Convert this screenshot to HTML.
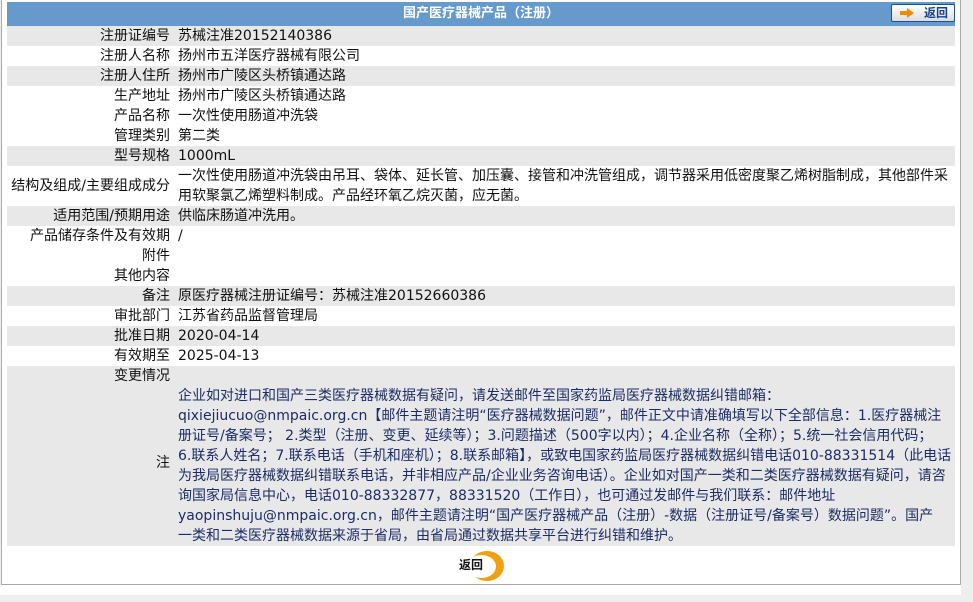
<!DOCTYPE html>
<html><head><meta charset="utf-8"><style>
*{margin:0;padding:0;box-sizing:border-box}
body{width:973px;height:602px;background:#eee;font-family:"DejaVu Sans","Noto Sans CJK SC",sans-serif;font-size:14px;color:#111;position:relative;overflow:hidden}
#box{position:absolute;left:1px;top:0;width:960px;height:585px;background:#fff;border:1px solid #aaa;border-top:none}
#strip{position:absolute;left:0;top:585px;width:961px;height:10px;background:#fff}
#hd{position:absolute;left:7px;top:2px;width:948px;height:24px;background:#6699cc;color:#fff;font-weight:bold;text-align:center;line-height:24px;font-size:13px}
#btn{position:absolute;left:891px;top:4px;width:64px;height:18px;border:1px solid #1a4f9a;border-radius:2px;background:linear-gradient(#fff,#ddd);color:#1a3f8a;font-weight:bold;font-size:12px;line-height:16px;padding-left:32px}
#btn i{position:absolute;left:9px;top:3px;width:0;height:0;border-left:7px solid #f08a00;border-top:5px solid transparent;border-bottom:5px solid transparent;margin-left:6px}
#btn b{position:absolute;left:8px;top:6px;width:7px;height:4px;background:#f08a00}
.r{position:absolute;left:7px;width:948px;line-height:20px}
.g{background:#e8e8e8}
.l{position:absolute;left:0;width:163px;text-align:right;white-space:nowrap}
.v{position:absolute;left:171px;width:777px;white-space:nowrap}
.n{color:#1c2c66}
</style></head><body>
<div id="box"></div><div id="strip"></div>
<div id="hd">国产医疗器械产品（注册）</div>
<div id="btn"><b></b><i></i>返回</div>
<div class="r g" style="top:26px;height:20px"><span class="l">注册证编号</span><span class="v">苏械注准20152140386</span></div>
<div class="r" style="top:46px;height:20px"><span class="l">注册人名称</span><span class="v">扬州市五洋医疗器械有限公司</span></div>
<div class="r g" style="top:66px;height:20px"><span class="l">注册人住所</span><span class="v">扬州市广陵区头桥镇通达路</span></div>
<div class="r" style="top:86px;height:20px"><span class="l">生产地址</span><span class="v">扬州市广陵区头桥镇通达路</span></div>
<div class="r" style="top:106px;height:20px"><span class="l">产品名称</span><span class="v">一次性使用肠道冲洗袋</span></div>
<div class="r" style="top:126px;height:20px"><span class="l">管理类别</span><span class="v">第二类</span></div>
<div class="r g" style="top:146px;height:20px"><span class="l">型号规格</span><span class="v">1000mL</span></div>
<div class="r" style="top:166px;height:40px"><span class="l" style="top:10px">结构及组成/主要组成成分</span><span class="v">一次性使用肠道冲洗袋由吊耳、袋体、延长管、加压囊、接管和冲洗管组成，调节器采用低密度聚乙烯树脂制成，其他部件采<br>用软聚氯乙烯塑料制成。产品经环氧乙烷灭菌，应无菌。</span></div>
<div class="r g" style="top:206px;height:20px"><span class="l">适用范围/预期用途</span><span class="v">供临床肠道冲洗用。</span></div>
<div class="r" style="top:226px;height:20px"><span class="l">产品储存条件及有效期</span><span class="v">/</span></div>
<div class="r" style="top:246px;height:20px"><span class="l">附件</span></div>
<div class="r" style="top:266px;height:20px"><span class="l">其他内容</span></div>
<div class="r g" style="top:286px;height:20px"><span class="l">备注</span><span class="v">原医疗器械注册证编号：苏械注准20152660386</span></div>
<div class="r" style="top:306px;height:20px"><span class="l">审批部门</span><span class="v">江苏省药品监督管理局</span></div>
<div class="r g" style="top:326px;height:20px"><span class="l">批准日期</span><span class="v">2020-04-14</span></div>
<div class="r" style="top:346px;height:20px"><span class="l">有效期至</span><span class="v">2025-04-13</span></div>
<div class="r g" style="top:366px;height:180px"><span class="l">变更情况</span><span class="l" style="top:87px">注</span><span class="v n" style="top:20px">企业如对进口和国产三类医疗器械数据有疑问，请发送邮件至国家药监局医疗器械数据纠错邮箱：<br>qixiejiucuo@nmpaic.org.cn【邮件主题请注明“医疗器械数据问题”，邮件正文中请准确填写以下全部信息：1.医疗器械注<br>册证号/备案号； 2.类型（注册、变更、延续等）；3.问题描述（500字以内）；4.企业名称（全称）；5.统一社会信用代码；<br>6.联系人姓名；7.联系电话（手机和座机）；8.联系邮箱】，或致电国家药监局医疗器械数据纠错电话010-88331514（此电话<br>为我局医疗器械数据纠错联系电话，并非相应产品/企业业务咨询电话）。企业如对国产一类和二类医疗器械数据有疑问，请咨<br>询国家局信息中心，电话010-88332877，88331520（工作日），也可通过发邮件与我们联系：邮件地址<br>yaopinshuju@nmpaic.org.cn，邮件主题请注明“国产医疗器械产品（注册）-数据（注册证号/备案号）数据问题”。国产<br>一类和二类医疗器械数据来源于省局，由省局通过数据共享平台进行纠错和维护。</span></div>
<div style="position:absolute;left:470px;top:551px;width:34px;height:30px;border-radius:50%;background:#f0a010"></div>
<div style="position:absolute;left:467px;top:555px;width:29px;height:23px;border-radius:50%;background:#fff"></div>
<div style="position:absolute;left:459px;top:556px;font-weight:bold;font-size:12px;line-height:18px;color:#111">返回</div>
</body></html>
